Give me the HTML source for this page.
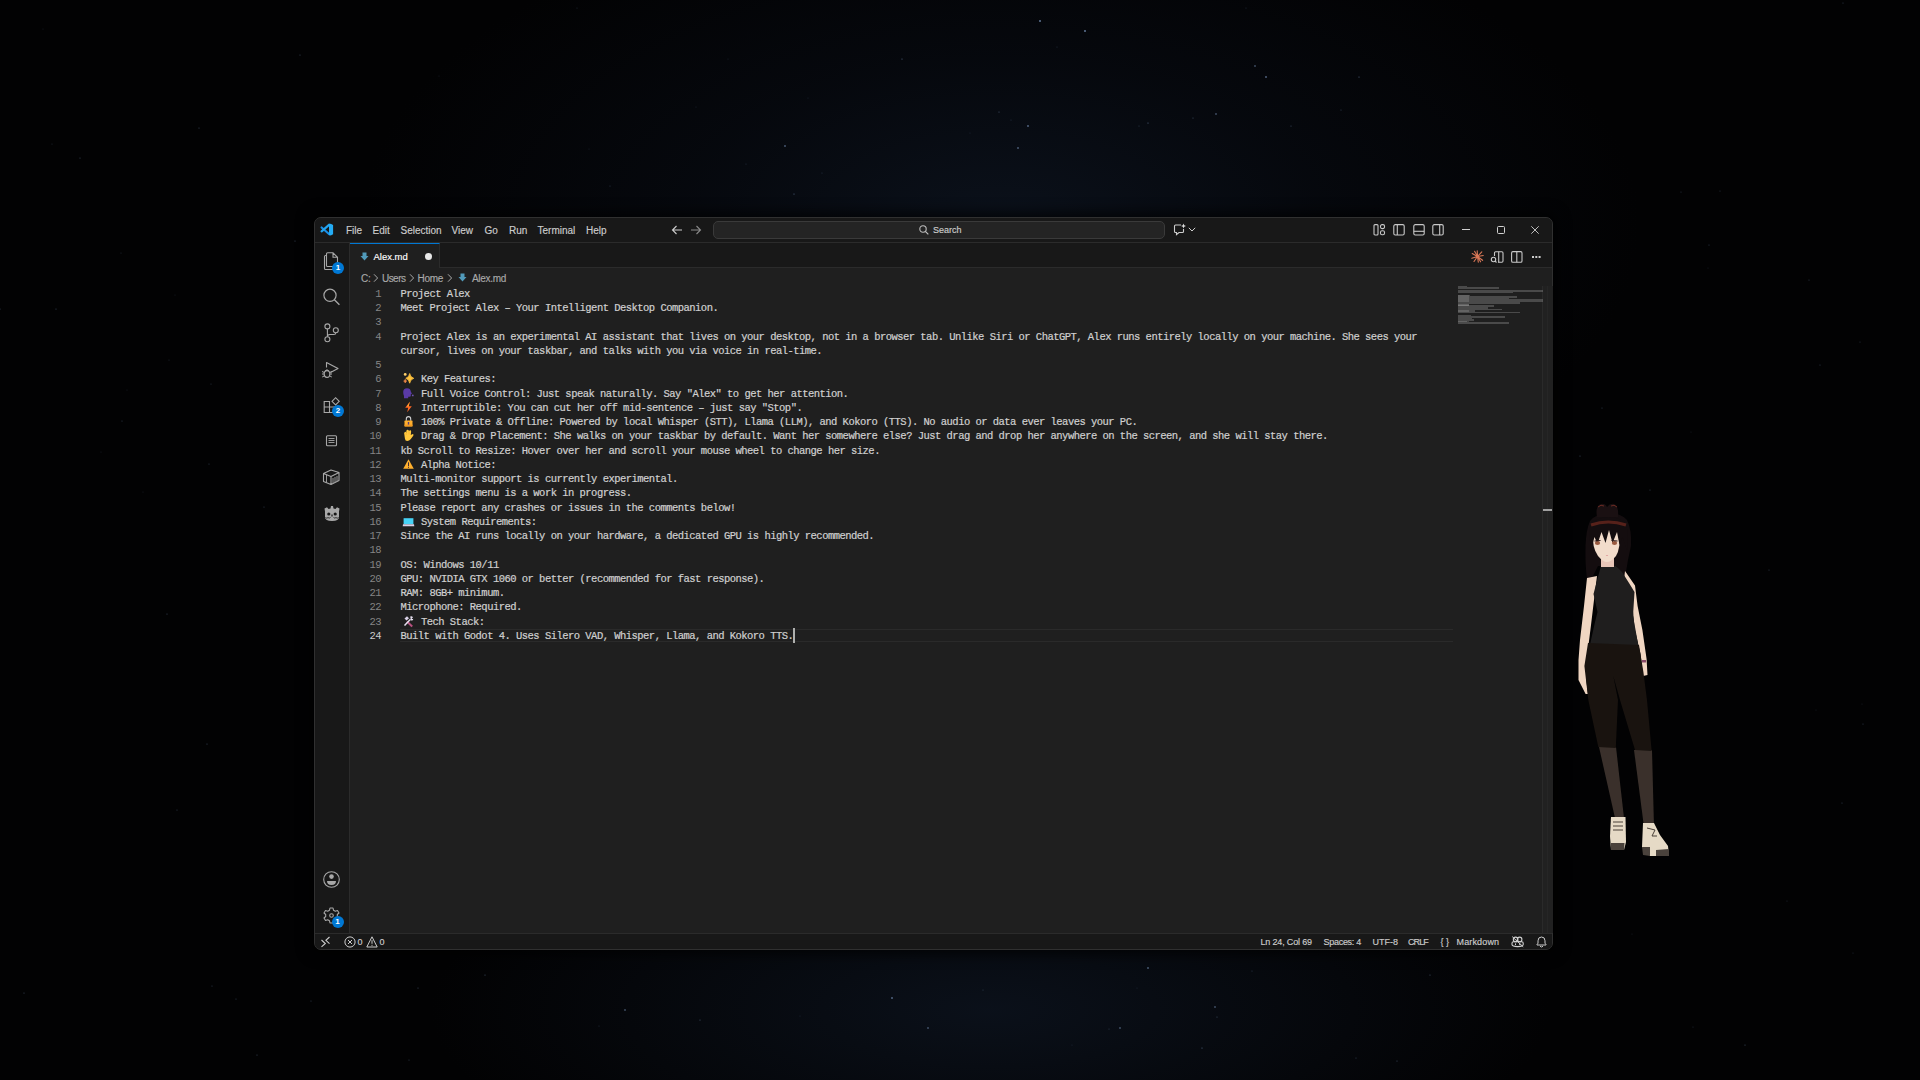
<!DOCTYPE html>
<html><head><meta charset="utf-8">
<style>
*{box-sizing:border-box;margin:0;padding:0}
html,body{width:1920px;height:1080px;overflow:hidden;background:#020203}
body{position:relative;font-family:"Liberation Sans",sans-serif}
#bg{position:absolute;left:0;top:0;width:1920px;height:1080px;
 background:
  radial-gradient(ellipse 640px 330px at 1000px 225px, rgba(11,17,27,1), rgba(8,12,20,0.6) 50%, rgba(0,0,0,0) 100%),
  radial-gradient(ellipse 560px 190px at 990px 1010px, rgba(11,17,27,0.95), rgba(0,0,0,0) 100%),
  #020203;}
.abs{position:absolute}
#win{position:absolute;left:314px;top:217px;width:1239px;height:733px;background:#1f1f1f;border-radius:7px;overflow:hidden;border:1px solid #303030;box-shadow:0 0 14px 4px rgba(0,0,0,0.75)}
#title{position:absolute;left:0;top:0;width:1239px;height:25px;background:#181818;border-bottom:1px solid #2b2b2b}
#act{position:absolute;left:0;top:25px;width:35px;height:692px;background:#181818;border-right:1px solid #2b2b2b}
#tabs{position:absolute;left:35px;top:25px;width:1204px;height:25px;background:#181818;border-bottom:1px solid #2b2b2b}
#tab{position:absolute;left:35px;top:25px;width:90px;height:25px;background:#1f1f1f;border-top:1px solid #0078d4;border-right:1px solid #2b2b2b}
#status{position:absolute;left:0;top:715px;width:1239px;height:17px;background:#181818;border-top:1px solid #2b2b2b}
.t{position:absolute;white-space:nowrap;color:#cccccc;line-height:12px;-webkit-text-stroke:0.15px currentColor}
.menu{font-size:10px}
.sb{font-size:9px;color:#cccccc}
.bc{font-size:10px;color:#a9a9a9}
#code{position:absolute;left:400.5px;top:286.75px;font-family:"Liberation Mono",monospace;font-size:10.5px;letter-spacing:-0.525px;line-height:14.25px;color:#d0d0d0;white-space:pre;-webkit-text-stroke:0.2px #d0d0d0}
#nums{position:absolute;left:349px;top:286.75px;width:32px;text-align:right;font-family:"Liberation Mono",monospace;font-size:10.5px;letter-spacing:-0.525px;line-height:14.25px;color:#858585;white-space:pre}
.em{display:inline-block;width:14.7px;height:10px;vertical-align:-1px;position:relative;letter-spacing:0}
.em svg{position:absolute;left:2px;top:-1px;width:11px;height:12px;overflow:visible}
svg.i{position:absolute;overflow:visible}
</style></head><body>
<div id="bg"></div>
<!-- stars -->
<svg class="abs" style="left:0;top:0" width="1920" height="1080">
<circle cx="1040" cy="21" r="0.8" fill="rgba(160,195,245,1.00)"/>
<circle cx="1085" cy="31" r="0.8" fill="rgba(160,195,245,1.00)"/>
<circle cx="1266" cy="77" r="0.8" fill="rgba(160,195,245,0.80)"/>
<circle cx="1255" cy="66" r="0.8" fill="rgba(160,195,245,0.60)"/>
<circle cx="1216" cy="114" r="0.8" fill="rgba(160,195,245,0.60)"/>
<circle cx="1028" cy="126" r="0.8" fill="rgba(160,195,245,0.80)"/>
<circle cx="1018" cy="148" r="0.8" fill="rgba(160,195,245,0.70)"/>
<circle cx="785" cy="146" r="0.8" fill="rgba(160,195,245,0.70)"/>
<circle cx="1148" cy="123" r="0.6" fill="rgba(160,195,245,0.50)"/>
<circle cx="1359" cy="77" r="0.6" fill="rgba(160,195,245,0.50)"/>
<circle cx="794" cy="194" r="0.6" fill="rgba(160,195,245,0.50)"/>
<circle cx="902" cy="59" r="0.6" fill="rgba(160,195,245,0.50)"/>
<circle cx="999" cy="112" r="0.6" fill="rgba(160,195,245,0.40)"/>
<circle cx="892" cy="998" r="0.8" fill="rgba(160,195,245,0.80)"/>
<circle cx="1148" cy="968" r="0.8" fill="rgba(160,195,245,0.70)"/>
<circle cx="1120" cy="1028" r="0.8" fill="rgba(160,195,245,0.60)"/>
<circle cx="625" cy="1010" r="0.8" fill="rgba(160,195,245,0.60)"/>
<circle cx="928" cy="1028" r="0.8" fill="rgba(160,195,245,0.60)"/>
<circle cx="1215" cy="1007" r="0.8" fill="rgba(160,195,245,0.60)"/>
<circle cx="1202" cy="1048" r="0.6" fill="rgba(160,195,245,0.50)"/>
<circle cx="485" cy="975" r="0.6" fill="rgba(160,195,245,0.40)"/>
<circle cx="700" cy="1020" r="0.6" fill="rgba(160,195,245,0.40)"/>
<circle cx="1430" cy="975" r="0.6" fill="rgba(160,195,245,0.40)"/>
<circle cx="1745" cy="1045" r="0.6" fill="rgba(160,195,245,0.40)"/>
<circle cx="808" cy="98" r="0.6" fill="rgba(160,195,245,0.15)"/>
<circle cx="1681" cy="192" r="0.6" fill="rgba(160,195,245,0.25)"/>
<circle cx="1193" cy="118" r="0.6" fill="rgba(160,195,245,0.35)"/>
<circle cx="439" cy="76" r="0.6" fill="rgba(160,195,245,0.15)"/>
<circle cx="143" cy="492" r="0.6" fill="rgba(160,195,245,0.15)"/>
<circle cx="121" cy="253" r="0.6" fill="rgba(160,195,245,0.20)"/>
<circle cx="1291" cy="126" r="0.6" fill="rgba(160,195,245,0.35)"/>
<circle cx="101" cy="452" r="0.6" fill="rgba(160,195,245,0.15)"/>
<circle cx="295" cy="241" r="0.6" fill="rgba(160,195,245,0.35)"/>
<circle cx="211" cy="384" r="0.6" fill="rgba(160,195,245,0.25)"/>
<circle cx="199" cy="128" r="0.6" fill="rgba(160,195,245,0.35)"/>
<circle cx="122" cy="421" r="0.6" fill="rgba(160,195,245,0.30)"/>
<circle cx="167" cy="614" r="0.6" fill="rgba(160,195,245,0.35)"/>
<circle cx="589" cy="149" r="0.6" fill="rgba(160,195,245,0.15)"/>
<circle cx="311" cy="1001" r="0.6" fill="rgba(160,195,245,0.30)"/>
<circle cx="80" cy="158" r="0.6" fill="rgba(160,195,245,0.35)"/>
<circle cx="1217" cy="1017" r="0.6" fill="rgba(160,195,245,0.35)"/>
<circle cx="1632" cy="934" r="0.6" fill="rgba(160,195,245,0.15)"/>
<circle cx="1720" cy="191" r="0.6" fill="rgba(160,195,245,0.25)"/>
<circle cx="970" cy="133" r="0.6" fill="rgba(160,195,245,0.15)"/>
<circle cx="1816" cy="710" r="0.6" fill="rgba(160,195,245,0.15)"/>
<circle cx="1011" cy="120" r="0.6" fill="rgba(160,195,245,0.20)"/>
<circle cx="264" cy="507" r="0.6" fill="rgba(160,195,245,0.30)"/>
<circle cx="800" cy="1016" r="0.6" fill="rgba(160,195,245,0.15)"/>
<circle cx="1809" cy="280" r="0.6" fill="rgba(160,195,245,0.30)"/>
<circle cx="1769" cy="570" r="0.6" fill="rgba(160,195,245,0.30)"/>
<circle cx="169" cy="360" r="0.6" fill="rgba(160,195,245,0.20)"/>
<circle cx="24" cy="993" r="0.6" fill="rgba(160,195,245,0.35)"/>
<circle cx="577" cy="8" r="0.6" fill="rgba(160,195,245,0.20)"/>
<circle cx="257" cy="1055" r="0.6" fill="rgba(160,195,245,0.35)"/>
<circle cx="1341" cy="110" r="0.6" fill="rgba(160,195,245,0.30)"/>
<circle cx="1842" cy="803" r="0.6" fill="rgba(160,195,245,0.30)"/>
<circle cx="212" cy="986" r="0.6" fill="rgba(160,195,245,0.30)"/>
<circle cx="127" cy="390" r="0.6" fill="rgba(160,195,245,0.15)"/>
<circle cx="696" cy="107" r="0.6" fill="rgba(160,195,245,0.15)"/>
<circle cx="0" cy="309" r="0.6" fill="rgba(160,195,245,0.35)"/>
<circle cx="207" cy="744" r="0.6" fill="rgba(160,195,245,0.35)"/>
<circle cx="52" cy="144" r="0.6" fill="rgba(160,195,245,0.20)"/>
<circle cx="236" cy="999" r="0.6" fill="rgba(160,195,245,0.30)"/>
<circle cx="983" cy="990" r="0.6" fill="rgba(160,195,245,0.25)"/>
<circle cx="175" cy="295" r="0.6" fill="rgba(160,195,245,0.15)"/>
<circle cx="1057" cy="47" r="0.6" fill="rgba(160,195,245,0.20)"/>
<circle cx="300" cy="55" r="0.6" fill="rgba(160,195,245,0.35)"/>
<circle cx="610" cy="186" r="0.6" fill="rgba(160,195,245,0.25)"/>
<circle cx="1860" cy="342" r="0.6" fill="rgba(160,195,245,0.25)"/>
<circle cx="1580" cy="456" r="0.6" fill="rgba(160,195,245,0.35)"/>
<circle cx="1109" cy="1029" r="0.6" fill="rgba(160,195,245,0.25)"/>
<circle cx="1650" cy="490" r="0.6" fill="rgba(160,195,245,0.30)"/>
<circle cx="409" cy="1060" r="0.6" fill="rgba(160,195,245,0.30)"/>
<circle cx="728" cy="59" r="0.6" fill="rgba(160,195,245,0.15)"/>
<circle cx="746" cy="164" r="0.6" fill="rgba(160,195,245,0.20)"/>
<circle cx="209" cy="464" r="0.6" fill="rgba(160,195,245,0.30)"/>
<circle cx="418" cy="988" r="0.6" fill="rgba(160,195,245,0.35)"/>
<circle cx="1843" cy="3" r="0.6" fill="rgba(160,195,245,0.30)"/>
<circle cx="1862" cy="704" r="0.6" fill="rgba(160,195,245,0.15)"/>
<circle cx="1709" cy="245" r="0.6" fill="rgba(160,195,245,0.30)"/>
<circle cx="1602" cy="408" r="0.6" fill="rgba(160,195,245,0.30)"/>
<circle cx="1820" cy="365" r="0.6" fill="rgba(160,195,245,0.30)"/>
<circle cx="177" cy="810" r="0.6" fill="rgba(160,195,245,0.30)"/>
<circle cx="822" cy="173" r="0.6" fill="rgba(160,195,245,0.20)"/>
<circle cx="56" cy="309" r="0.6" fill="rgba(160,195,245,0.35)"/>
<circle cx="1853" cy="953" r="0.6" fill="rgba(160,195,245,0.20)"/>
<circle cx="1252" cy="971" r="0.6" fill="rgba(160,195,245,0.25)"/>
<circle cx="43" cy="29" r="0.6" fill="rgba(160,195,245,0.15)"/>
<circle cx="1691" cy="432" r="0.6" fill="rgba(160,195,245,0.15)"/>
<circle cx="599" cy="1026" r="0.6" fill="rgba(160,195,245,0.20)"/>
<circle cx="1708" cy="268" r="0.6" fill="rgba(160,195,245,0.15)"/>
<circle cx="1863" cy="724" r="0.6" fill="rgba(160,195,245,0.30)"/>
<circle cx="1356" cy="1058" r="0.6" fill="rgba(160,195,245,0.30)"/>
<circle cx="1693" cy="1027" r="0.6" fill="rgba(160,195,245,0.20)"/>
<circle cx="1072" cy="1045" r="0.6" fill="rgba(160,195,245,0.15)"/>
<circle cx="1787" cy="901" r="0.6" fill="rgba(160,195,245,0.20)"/>
<circle cx="1246" cy="8" r="0.6" fill="rgba(160,195,245,0.20)"/>
<circle cx="1139" cy="126" r="0.6" fill="rgba(160,195,245,0.25)"/>
<circle cx="1397" cy="1061" r="0.6" fill="rgba(160,195,245,0.35)"/>
<circle cx="1137" cy="988" r="0.6" fill="rgba(160,195,245,0.15)"/>
</svg>
<!--STARS-END-->
<div id="win">
 <div id="title"></div>
 <div id="act"></div>
 <div id="tabs"></div>
 <div id="tab"></div>
 <div id="status"></div>
</div>
<!-- title bar -->
<svg class="i" style="left:317px;top:220px" width="22" height="20" viewBox="0 0 22 20"><path d="M4.6 7.5L12.3 14.3" stroke="#1a8fe6" stroke-width="2.2" stroke-linecap="round"/><path d="M4.6 11.4L12.3 4.7" stroke="#22a4f0" stroke-width="2.2" stroke-linecap="round"/><path d="M12 4.3L13.8 3.8L16.1 5V14.3L13.8 15.4L12 14.9Z" fill="#24acf4"/></svg>
<div class="t menu" style="left:346px;top:225px">File</div>
<div class="t menu" style="left:372.5px;top:225px">Edit</div>
<div class="t menu" style="left:400.5px;top:225px">Selection</div>
<div class="t menu" style="left:451.5px;top:225px">View</div>
<div class="t menu" style="left:484.5px;top:225px">Go</div>
<div class="t menu" style="left:509px;top:225px">Run</div>
<div class="t menu" style="left:537.5px;top:225px">Terminal</div>
<div class="t menu" style="left:586px;top:225px">Help</div>
<svg class="i" style="left:671px;top:224px" width="12" height="12" viewBox="0 0 12 12"><path d="M11 6H1.5M5.5 2L1.5 6l4 4" fill="none" stroke="#cccccc" stroke-width="1.1"/></svg>
<svg class="i" style="left:690px;top:224px" width="12" height="12" viewBox="0 0 12 12"><path d="M1 6h9.5M6.5 2l4 4-4 4" fill="none" stroke="#8a8a8a" stroke-width="1.1"/></svg>
<div class="abs" style="left:713px;top:221px;width:452px;height:18px;border:1px solid #3a3a3a;border-radius:5px;background:#242424"></div>
<svg class="i" style="left:919px;top:225px" width="10" height="10" viewBox="0 0 10 10"><circle cx="4" cy="4" r="3.2" fill="none" stroke="#bdbdbd" stroke-width="1.1"/><path d="M6.3 6.3L9.3 9.3" stroke="#bdbdbd" stroke-width="1.2"/></svg>
<div class="t" style="left:933px;top:224px;font-size:9px;color:#cccccc">Search</div>
<svg class="i" style="left:1173px;top:223px" width="14" height="13" viewBox="0 0 14 13"><path d="M8 2H2.5Q1.5 2 1.5 3V8.5Q1.5 9.5 2.5 9.5H3.5V11.5L6 9.5H9.5Q10.5 9.5 10.5 8.5V6" fill="none" stroke="#cccccc" stroke-width="1.1"/><path d="M10.5 0.5L11.2 2.3L13 3L11.2 3.7L10.5 5.5L9.8 3.7L8 3L9.8 2.3Z" fill="#dddddd"/></svg>
<svg class="i" style="left:1188px;top:227px" width="8" height="5" viewBox="0 0 8 5"><path d="M0.8 0.8L4 4L7.2 0.8" fill="none" stroke="#cccccc" stroke-width="1"/></svg>
<svg class="i" style="left:1373px;top:224px" width="13" height="12" viewBox="0 0 13 12"><rect x="1" y="0.6" width="4" height="10.4" rx="1" fill="none" stroke="#c8c8c8" stroke-width="1.1"/><rect x="7.5" y="0.6" width="4" height="4" rx="1.5" fill="none" stroke="#c8c8c8" stroke-width="1.1"/><rect x="7.5" y="6.8" width="4" height="4" rx="1.5" fill="none" stroke="#c8c8c8" stroke-width="1.1"/></svg>
<svg class="i" style="left:1393px;top:224px" width="12" height="12" viewBox="0 0 12 12"><rect x="0.8" y="0.6" width="10.4" height="10.4" rx="1.5" fill="none" stroke="#c8c8c8" stroke-width="1.1"/><path d="M4.3 0.6V11" stroke="#c8c8c8" stroke-width="1.1"/></svg>
<svg class="i" style="left:1413px;top:224px" width="12" height="12" viewBox="0 0 12 12"><rect x="0.8" y="0.6" width="10.4" height="10.4" rx="1.5" fill="none" stroke="#c8c8c8" stroke-width="1.1"/><path d="M0.8 7.3H11.2" stroke="#c8c8c8" stroke-width="1.1"/></svg>
<svg class="i" style="left:1432px;top:224px" width="12" height="12" viewBox="0 0 12 12"><rect x="0.8" y="0.6" width="10.4" height="10.4" rx="1.5" fill="none" stroke="#c8c8c8" stroke-width="1.1"/><path d="M7.7 0.6V11" stroke="#c8c8c8" stroke-width="1.1"/></svg>
<div class="abs" style="left:1462px;top:229px;width:8px;height:1px;background:#d0d0d0"></div>
<div class="abs" style="left:1497px;top:226px;width:8px;height:8px;border:1px solid #d0d0d0;border-radius:1.5px"></div>
<svg class="i" style="left:1531px;top:226px" width="8" height="8" viewBox="0 0 8 8"><path d="M0.3 0.3L7.7 7.7M7.7 0.3L0.3 7.7" stroke="#d0d0d0" stroke-width="0.9"/></svg>

<!-- activity bar -->
<svg class="i" style="left:323px;top:252px" width="17" height="19" viewBox="0 0 17 19">
 <path d="M3.5 3.5H2.6Q1.5 3.5 1.5 4.6V16.4Q1.5 17.5 2.6 17.5H10.4Q11.5 17.5 11.5 16.4V15.5" fill="none" stroke="#a8a8a8" stroke-width="1.1"/>
 <path d="M4.6 0.8H10L14.5 5.3V13.4Q14.5 14.5 13.4 14.5H4.6Q3.5 14.5 3.5 13.4V1.9Q3.5 0.8 4.6 0.8Z M10 0.8V5.3H14.5" fill="none" stroke="#a8a8a8" stroke-width="1.1"/>
</svg>
<div class="abs" style="left:332px;top:261.5px;width:12px;height:12px;border-radius:6px;background:#0078d4;color:#fff;font-size:8px;line-height:12px;text-align:center;font-weight:bold">1</div>
<svg class="i" style="left:322px;top:288px" width="19" height="19" viewBox="0 0 19 19"><circle cx="8" cy="7.3" r="6.1" fill="none" stroke="#a8a8a8" stroke-width="1.2"/><path d="M12.4 11.7L17.4 16.8" stroke="#a8a8a8" stroke-width="1.3"/></svg>
<svg class="i" style="left:323px;top:322px" width="17" height="21" viewBox="0 0 17 21"><circle cx="4.4" cy="4.4" r="2.5" fill="none" stroke="#a8a8a8" stroke-width="1.1"/><circle cx="12.8" cy="8.2" r="2.5" fill="none" stroke="#a8a8a8" stroke-width="1.1"/><circle cx="4.4" cy="17.3" r="2.5" fill="none" stroke="#a8a8a8" stroke-width="1.1"/><path d="M4.4 6.9V14.8M12.8 10.7Q12.8 12.5 10.8 12.5H6.8Q4.4 12.5 4.4 14.8" fill="none" stroke="#a8a8a8" stroke-width="1.1"/></svg>
<svg class="i" style="left:321px;top:361px" width="19" height="18" viewBox="0 0 19 18">
 <path d="M5.5 6.5V1.5L17 7.5L9.5 11.5" fill="none" stroke="#a8a8a8" stroke-width="1.1" stroke-linejoin="round"/>
 <ellipse cx="6" cy="13" rx="2.8" ry="3.4" fill="none" stroke="#a8a8a8" stroke-width="1.1"/>
 <path d="M1 10.5L3.3 11.5M1 13H3.2M1.2 16L3.5 14.8M11 10.5L8.7 11.5M11 13H8.8M10.8 16L8.5 14.8M4.3 9.6Q6 8 7.7 9.6" fill="none" stroke="#a8a8a8" stroke-width="1"/>
</svg>
<svg class="i" style="left:323px;top:396px" width="18" height="18" viewBox="0 0 18 18">
 <path d="M1.2 5.5H6.5V16.5H1.2ZM1.2 11H12V16.5H6.5M6.5 5.5V11" fill="none" stroke="#a8a8a8" stroke-width="1.1"/>
 <path d="M9 5.3L12.6 1.7L16.2 5.3L12.6 8.9Z" fill="none" stroke="#a8a8a8" stroke-width="1.1"/>
</svg>
<div class="abs" style="left:332px;top:405px;width:12px;height:12px;border-radius:6px;background:#0078d4;color:#fff;font-size:8px;line-height:12px;text-align:center;font-weight:bold">2</div>
<svg class="i" style="left:325px;top:435px" width="13" height="12" viewBox="0 0 13 12"><rect x="1.5" y="0.8" width="10" height="10" rx="1" fill="none" stroke="#a8a8a8" stroke-width="1.1"/><path d="M3.5 3.5H9.5M3.5 5.5H9.5M3.5 7.5H9.5" stroke="#a8a8a8" stroke-width="0.9"/></svg>
<svg class="i" style="left:322px;top:469px" width="19" height="17" viewBox="0 0 19 17">
 <path d="M1.5 4.5L9 1L17 3.5V11.5L9 15.5L1.5 12.5Z M1.5 4.5L9 7.5L17 3.5 M9 7.5V15.5" fill="none" stroke="#a8a8a8" stroke-width="1.1" stroke-linejoin="round"/>
 <path d="M4.5 6V13.5M11 9V14M13 8V13M15 7V12" stroke="#a8a8a8" stroke-width="0.9"/>
</svg>
<svg class="i" style="left:323px;top:505px" width="18" height="17" viewBox="0 0 18 17">
 <path fill="#a8a8a8" d="M2 6.5L1.5 3.5L4 2.3L5.5 4L7.5 3.4L8 1L10 1L10.5 3.4L12.5 4L14 2.3L16.5 3.5L16 6.5V12Q16 16 9 16Q2 16 2 12Z"/>
 <circle cx="5.8" cy="9" r="1.6" fill="#181818"/><circle cx="12.2" cy="9" r="1.6" fill="#181818"/><rect x="8.4" y="9.5" width="1.2" height="2" fill="#181818"/>
 <path d="M2.5 12.5Q4 14 5 12.5Q6 13.8 7.5 12.5M10.5 12.5Q12 13.8 13 12.5Q14 14 15.5 12.5" fill="none" stroke="#181818" stroke-width="0.8"/>
</svg>
<svg class="i" style="left:323px;top:871px" width="17" height="17" viewBox="0 0 17 17"><circle cx="8.5" cy="8.5" r="7.8" fill="none" stroke="#a8a8a8" stroke-width="1.1"/><circle cx="8.5" cy="5.6" r="2.3" fill="#a8a8a8"/><path d="M4 10H13Q13 14 8.5 14Q4 14 4 10Z" fill="#a8a8a8"/></svg>
<svg class="i" style="left:323px;top:907px" width="17" height="17" viewBox="0 0 17 17"><path d="M7 1H10L10.5 3.2L12.3 4.2L14.5 3.5L16 6L14.3 7.5V9.5L16 11L14.5 13.5L12.3 12.8L10.5 13.8L10 16H7L6.5 13.8L4.7 12.8L2.5 13.5L1 11L2.7 9.5V7.5L1 6L2.5 3.5L4.7 4.2L6.5 3.2Z" fill="none" stroke="#a8a8a8" stroke-width="1.1" stroke-linejoin="round"/><circle cx="8.5" cy="8.5" r="1.8" fill="none" stroke="#a8a8a8" stroke-width="1.1"/></svg>
<div class="abs" style="left:331.5px;top:916px;width:12px;height:12px;border-radius:6px;background:#0078d4;color:#fff;font-size:8px;line-height:12px;text-align:center;font-weight:bold">1</div>

<!-- tabs -->
<svg class="i" style="left:360px;top:252px" width="9" height="9" viewBox="0 0 9 9"><path d="M2.5 0.5H6.5V4H8.5L4.5 8.5L0.5 4H2.5Z" fill="#519aba"/></svg>
<div class="t" style="left:373.5px;top:251px;font-size:9.5px;color:#ffffff">Alex.md</div>
<div class="abs" style="left:424.5px;top:253px;width:7px;height:7px;border-radius:4px;background:#e8e8e8"></div>
<svg class="i" style="left:1471px;top:250px" width="13" height="13" viewBox="0 0 13 13"><g stroke="#d97757" stroke-width="1.1" stroke-linecap="round"><path d="M6.5 6.5L6.2 0.8M6.5 6.5L10.8 1.8M6.5 6.5L12.3 5.5M6.5 6.5L11.6 10.3M6.5 6.5L7.3 12.2M6.5 6.5L3 11.5M6.5 6.5L0.8 8.3M6.5 6.5L1.2 3.5M6.5 6.5L3.6 1.3M6.5 6.5L9.6 11.8"/></g><circle cx="6.5" cy="6.5" r="1.6" fill="#d97757"/></svg>
<svg class="i" style="left:1490px;top:251px" width="14" height="12" viewBox="0 0 14 12"><path d="M4.5 5V2Q4.5 0.8 5.7 0.8H11.8Q13 0.8 13 2V10Q13 11.2 11.8 11.2H8" fill="none" stroke="#c8c8c8" stroke-width="1.1"/><path d="M8.7 0.8V11.2" stroke="#c8c8c8" stroke-width="1.1"/><circle cx="3.5" cy="8.5" r="2.2" fill="none" stroke="#c8c8c8" stroke-width="1.1"/><path d="M5 10L6.5 11.5" stroke="#c8c8c8" stroke-width="1.1"/></svg>
<svg class="i" style="left:1511px;top:251px" width="12" height="12" viewBox="0 0 12 12"><rect x="0.6" y="0.6" width="10.4" height="10.6" rx="1.3" fill="none" stroke="#c8c8c8" stroke-width="1.1"/><path d="M5.8 0.6V11.2" stroke="#c8c8c8" stroke-width="1.1"/></svg>
<div class="abs" style="left:1532px;top:256px;width:2px;height:2px;background:#cccccc;box-shadow:3.3px 0 0 #cccccc,6.6px 0 0 #cccccc"></div>
<!-- breadcrumbs -->
<div class="t bc" style="left:361px;top:272.6px;letter-spacing:-0.3px">C:</div>
<svg class="i" style="left:373px;top:273.5px" width="6" height="8" viewBox="0 0 6 8"><path d="M1 0.3L4.6 4L1 7.7" fill="none" stroke="#a9a9a9" stroke-width="1"/></svg>
<div class="t bc" style="left:382px;top:272.6px;letter-spacing:-0.55px">Users</div>
<svg class="i" style="left:408.5px;top:273.5px" width="6" height="8" viewBox="0 0 6 8"><path d="M1 0.3L4.6 4L1 7.7" fill="none" stroke="#a9a9a9" stroke-width="1"/></svg>
<div class="t bc" style="left:417.5px;top:272.6px;letter-spacing:-0.3px">Home</div>
<svg class="i" style="left:447px;top:273.5px" width="6" height="8" viewBox="0 0 6 8"><path d="M1 0.3L4.6 4L1 7.7" fill="none" stroke="#a9a9a9" stroke-width="1"/></svg>
<svg class="i" style="left:457.5px;top:273px" width="9" height="9" viewBox="0 0 9 9"><path d="M2.5 0.5H6.5V4H8.5L4.5 8.5L0.5 4H2.5Z" fill="#519aba"/></svg>
<div class="t bc" style="left:472px;top:272.6px;letter-spacing:-0.3px">Alex.md</div>

<!-- editor -->
<div class="abs" style="left:400px;top:628.6px;width:1053px;height:13.6px;border-top:1px solid #2a2a2a;border-bottom:1px solid #2a2a2a"></div>
<div id="code">Project Alex
Meet Project Alex – Your Intelligent Desktop Companion.

Project Alex is an experimental AI assistant that lives on your desktop, not in a browser tab. Unlike Siri or ChatGPT, Alex runs entirely locally on your machine. She sees your
cursor, lives on your taskbar, and talks with you via voice in real-time.

<span class="em"><svg viewBox="0 0 11 12"><path d="M6.7 1.5Q7.2 5.2 10.8 6.3Q7.2 7.4 6.7 11.2Q6.2 7.4 2.8 6.3Q6.2 5.2 6.7 1.5Z" fill="#ffc23d" stroke="#ffc23d" stroke-width="0.8" stroke-linejoin="round"/><circle cx="2.2" cy="2.4" r="1.4" fill="#ffcf6a"/><path d="M2.2 7.2Q2.5 8.7 3.8 9.1Q2.5 9.5 2.2 11Q1.9 9.5 0.6 9.1Q1.9 8.7 2.2 7.2Z" fill="#ff8f4a" stroke="#ff8f4a" stroke-width="0.5"/></svg></span> Key Features:
<span class="em"><svg viewBox="0 0 11 12"><path d="M0.2 5Q0.2 1.2 4 1.2Q7.6 1.2 7.8 4.6L8.9 6.8L7.8 7.3V8.8Q7.8 9.8 6.6 9.8H5.2V11.3H1V9Q0.2 7.5 0.2 5Z" fill="#5a3aa6"/><circle cx="9.8" cy="8.4" r="0.9" fill="#6f56b0"/></svg></span> Full Voice Control: Just speak naturally. Say "Alex" to get her attention.
<span class="em"><svg viewBox="0 0 11 12"><path d="M6.8 0.8L2.2 6.8H5.2L4.2 11.3L8.8 5.2H5.8Z" fill="#ff6723"/><path d="M6.8 0.8L4 5.5H5.5Z" fill="#ffb02e"/></svg></span> Interruptible: You can cut her off mid-sentence – just say "Stop".
<span class="em"><svg viewBox="0 0 11 12"><path d="M3.3 5.8V3.9Q3.3 1.6 5.5 1.6Q7.7 1.6 7.7 3.9V5.8" fill="none" stroke="#d0d0d0" stroke-width="1.1"/><rect x="1.5" y="5.6" width="8" height="5.8" rx="0.6" fill="#ffb02e"/><rect x="1.5" y="9.6" width="8" height="1.8" fill="#f29a22"/><rect x="4.8" y="7" width="1.4" height="2.6" fill="#5a3d7a"/></svg></span> 100% Private &amp; Offline: Powered by local Whisper (STT), Llama (LLM), and Kokoro (TTS). No audio or data ever leaves your PC.
<span class="em"><svg viewBox="0 0 11 12"><path d="M1.4 6Q0.6 3.4 1.9 2.9Q3 2.6 3.3 4L3.3 2.2Q3.5 0.7 4.8 0.8Q5.9 0.9 6 2.3L6.2 1.7Q6.8 0.9 7.6 1.3Q8.4 1.7 8.1 3.1L7.8 6L9.3 5.2Q10.3 4.8 10.5 5.8Q10.6 6.5 9.7 7.4L7.6 10.2Q6.2 11.9 4.3 11.9Q2.1 11.9 1.9 9.4Z" fill="#ffc83d"/><path d="M3.3 4V6M6 2.3V5.5" stroke="#f0a030" stroke-width="0.5"/></svg></span> Drag &amp; Drop Placement: She walks on your taskbar by default. Want her somewhere else? Just drag and drop her anywhere on the screen, and she will stay there.
kb Scroll to Resize: Hover over her and scroll your mouse wheel to change her size.
<span class="em"><svg viewBox="0 0 11 12"><path d="M5.5 1.2L10.8 10.8H0.2Z" fill="#ffb02e"/><rect x="5" y="4.3" width="1" height="3.8" fill="#402a32"/><rect x="5" y="8.8" width="1" height="1" fill="#402a32"/></svg></span> Alpha Notice:
Multi-monitor support is currently experimental.
The settings menu is a work in progress.
Please report any crashes or issues in the comments below!
<span class="em"><svg viewBox="0 0 11 12"><rect x="0.6" y="3.2" width="9.8" height="6" fill="#46d2f5"/><path d="M0 9.2H11L11.3 11.3H-0.3Z" fill="#d8d0e6"/></svg></span> System Requirements:
Since the AI runs locally on your hardware, a dedicated GPU is highly recommended.

OS: Windows 10/11
GPU: NVIDIA GTX 1060 or better (recommended for fast response).
RAM: 8GB+ minimum.
Microphone: Required.
<span class="em"><svg viewBox="0 0 11 12"><path d="M4 6.5L9.2 11.5" stroke="#b8507f" stroke-width="2"/><path d="M1.5 3.5L4 1.2L6 3.2L3.5 5.5Z" fill="#d8d0e6"/><path d="M1.5 10.5L7.5 4.3" stroke="#e6e0f0" stroke-width="1.5"/><path d="M7.2 1.5Q9.2 0.8 10 2.5Q9 2.8 8.6 3.5Q9.3 4.2 10.3 3.7Q10.4 5.8 8 5.6" fill="#e6e0f0"/></svg></span> Tech Stack:
Built with Godot 4. Uses Silero VAD, Whisper, Llama, and Kokoro TTS.</div>
<div id="nums">1
2
3
4

5
6
7
8
9
10
11
12
13
14
15
16
17
18
19
20
21
22
23
<span style="color:#cccccc">24</span></div>
<div class="abs" style="left:793px;top:628px;width:2px;height:14.5px;background:#aeafad"></div>
<!--EDITOR-END-->
<!-- status bar -->
<svg class="i" style="left:320px;top:937px" width="11" height="11" viewBox="0 0 11 11"><path d="M1.5 3L5.3 6.5L1.5 9.9M9.5 0L5.9 3.3L9.5 6.7" fill="none" stroke="#cccccc" stroke-width="1.1"/></svg>
<svg class="i" style="left:343.5px;top:936px" width="12" height="12" viewBox="0 0 12 12"><circle cx="6" cy="6" r="5.1" fill="none" stroke="#cccccc" stroke-width="1"/><path d="M4 4L8 8M8 4L4 8" stroke="#cccccc" stroke-width="1"/></svg>
<div class="t sb" style="left:357.5px;top:936px">0</div>
<svg class="i" style="left:365.5px;top:936px" width="12" height="12" viewBox="0 0 12 12"><path d="M6 0.8L11.2 11H0.8Z" fill="none" stroke="#cccccc" stroke-width="1" stroke-linejoin="round"/><path d="M6 4.2V7.8M6 8.8V9.8" stroke="#cccccc" stroke-width="1"/></svg>
<div class="t sb" style="left:379.5px;top:936px">0</div>
<div class="t sb" style="left:1260.5px;top:936px;letter-spacing:-0.17px">Ln 24, Col 69</div>
<div class="t sb" style="left:1323.5px;top:936px;letter-spacing:-0.28px">Spaces: 4</div>
<div class="t sb" style="left:1372.5px;top:936px">UTF-8</div>
<div class="t sb" style="left:1408px;top:936px;letter-spacing:-0.9px">CRLF</div>
<div class="t sb" style="left:1440.5px;top:936px">{ }</div>
<div class="t sb" style="left:1456.5px;top:936px;letter-spacing:0.15px">Markdown</div>
<svg class="i" style="left:1510.5px;top:936px" width="14" height="12" viewBox="0 0 14 12"><circle cx="4.6" cy="3.4" r="2.3" fill="none" stroke="#d0d0d0" stroke-width="1.1"/><circle cx="8.6" cy="3.4" r="2.3" fill="none" stroke="#d0d0d0" stroke-width="1.1"/><path d="M1 7.2Q1 5.8 2.4 5.8H10.8Q12.2 5.8 12.2 7.2V8.6Q12.2 10.6 6.6 10.6Q1 10.6 1 8.6Z" fill="none" stroke="#d0d0d0" stroke-width="1.1"/><path d="M4.5 7.4V9M8.7 7.4V9" stroke="#d0d0d0" stroke-width="1"/><path d="M1.2 0.6L12.2 10.8" stroke="#d0d0d0" stroke-width="1"/></svg>
<svg class="i" style="left:1535.5px;top:936px" width="11" height="12" viewBox="0 0 11 12"><path d="M1 9V8.5L2 7.2V4.8Q2 1 5.5 1Q9 1 9 4.8V7.2L10 8.5V9Z" fill="none" stroke="#cccccc" stroke-width="1" stroke-linejoin="round"/><path d="M4 10.2Q5.5 11.8 7 10.2" fill="none" stroke="#cccccc" stroke-width="1"/></svg>
<!-- minimap & scrollbar -->
<div class="abs" style="left:1541.5px;top:286px;width:11px;height:647px;background:#212121;border-left:1px solid #2a2a2a"></div><div class="abs" style="left:1546.5px;top:286px;width:1px;height:647px;background:#262626"></div>
<div class="abs" style="left:1543px;top:509px;width:9px;height:2px;background:#a0a0a0"></div>
<!-- minimap -->
<div class="abs" style="left:1458px;top:285.70px;width:9.0px;height:1.6px;background:rgba(175,175,175,0.30)"></div>
<div class="abs" style="left:1458px;top:287.22px;width:41.2px;height:1.6px;background:rgba(175,175,175,0.30)"></div>
<div class="abs" style="left:1458px;top:290.26px;width:85.0px;height:1.6px;background:rgba(175,175,175,0.30)"></div>
<div class="abs" style="left:1458px;top:291.78px;width:54.8px;height:1.6px;background:rgba(175,175,175,0.30)"></div>
<div class="abs" style="left:1458px;top:294.82px;width:12.0px;height:1.6px;background:rgba(175,175,175,0.30)"></div>
<div class="abs" style="left:1458px;top:294.82px;width:11px;height:1.6px;background:rgba(175,175,175,0.25)"></div>
<div class="abs" style="left:1458px;top:296.34px;width:59.2px;height:1.6px;background:rgba(175,175,175,0.30)"></div>
<div class="abs" style="left:1458px;top:296.34px;width:11px;height:1.6px;background:rgba(175,175,175,0.25)"></div>
<div class="abs" style="left:1458px;top:297.86px;width:51.0px;height:1.6px;background:rgba(175,175,175,0.30)"></div>
<div class="abs" style="left:1458px;top:297.86px;width:11px;height:1.6px;background:rgba(175,175,175,0.25)"></div>
<div class="abs" style="left:1458px;top:299.38px;width:85.0px;height:1.6px;background:rgba(175,175,175,0.30)"></div>
<div class="abs" style="left:1458px;top:299.38px;width:11px;height:1.6px;background:rgba(175,175,175,0.25)"></div>
<div class="abs" style="left:1458px;top:300.90px;width:85.0px;height:1.6px;background:rgba(175,175,175,0.30)"></div>
<div class="abs" style="left:1458px;top:300.90px;width:11px;height:1.6px;background:rgba(175,175,175,0.25)"></div>
<div class="abs" style="left:1458px;top:302.42px;width:62.2px;height:1.6px;background:rgba(175,175,175,0.30)"></div>
<div class="abs" style="left:1458px;top:303.94px;width:10.5px;height:1.6px;background:rgba(175,175,175,0.30)"></div>
<div class="abs" style="left:1458px;top:303.94px;width:11px;height:1.6px;background:rgba(175,175,175,0.25)"></div>
<div class="abs" style="left:1458px;top:305.46px;width:36.0px;height:1.6px;background:rgba(175,175,175,0.30)"></div>
<div class="abs" style="left:1458px;top:306.98px;width:30.0px;height:1.6px;background:rgba(175,175,175,0.30)"></div>
<div class="abs" style="left:1458px;top:308.50px;width:43.5px;height:1.6px;background:rgba(175,175,175,0.30)"></div>
<div class="abs" style="left:1458px;top:310.02px;width:17.2px;height:1.6px;background:rgba(175,175,175,0.30)"></div>
<div class="abs" style="left:1458px;top:310.02px;width:11px;height:1.6px;background:rgba(175,175,175,0.25)"></div>
<div class="abs" style="left:1458px;top:311.54px;width:61.5px;height:1.6px;background:rgba(175,175,175,0.30)"></div>
<div class="abs" style="left:1458px;top:314.58px;width:12.8px;height:1.6px;background:rgba(175,175,175,0.30)"></div>
<div class="abs" style="left:1458px;top:316.10px;width:47.2px;height:1.6px;background:rgba(175,175,175,0.30)"></div>
<div class="abs" style="left:1458px;top:317.62px;width:13.5px;height:1.6px;background:rgba(175,175,175,0.30)"></div>
<div class="abs" style="left:1458px;top:319.14px;width:15.8px;height:1.6px;background:rgba(175,175,175,0.30)"></div>
<div class="abs" style="left:1458px;top:320.66px;width:9.0px;height:1.6px;background:rgba(175,175,175,0.30)"></div>
<div class="abs" style="left:1458px;top:320.66px;width:11px;height:1.6px;background:rgba(175,175,175,0.25)"></div>
<div class="abs" style="left:1458px;top:322.18px;width:51.0px;height:1.6px;background:rgba(175,175,175,0.30)"></div>
<!--MINIMAP-END-->

<!-- character -->
<svg class="abs" style="left:1570px;top:495px" width="105" height="370" viewBox="1570 495 105 370">
 <!-- hair back -->
 <path d="M1590 521Q1597 513 1608 513Q1621 513 1627 520Q1632 530 1631 546L1628 560L1626 572L1622 580L1618 579L1617 566L1598 566L1594 574L1591 580L1587 579Q1585 564 1585.5 546Q1586 530 1590 521Z" fill="#140d0f"/>
 <!-- bun -->
 <path d="M1597 517Q1595 506 1601 504Q1605 503 1607 507Q1610 503 1614 504Q1619 506 1618 517Z" fill="#1a1012"/>
 <path d="M1598 507Q1601 504 1604 506M1611 506Q1614 504 1617 507" stroke="#6a2a22" stroke-width="1" fill="none"/>
 <!-- stockings -->
 <path d="M1599 747L1616 747L1624 818L1615 818Z" fill="#3a302b"/>
 <path d="M1634 750L1652 750L1654 827L1644 827Z" fill="#3a302b"/>
 <!-- arms -->
 <path d="M1587 578L1597 576L1594 600L1591 625L1588.5 645L1586 678L1588 694L1585.6 694L1578.5 680L1578.5 660L1580 640L1584 606Z" fill="#f0d6c2"/>
 <path d="M1625 571L1635 585.6L1637.6 606L1642.4 630L1646.6 659L1647.5 675L1643 676L1640.5 654L1634.5 628L1632 600L1624 580Z" fill="#f0d6c2"/>
 <!-- top -->
 <path d="M1601 566L1616 566L1622 572L1629 583L1634.5 592L1633 615.7L1638.6 647L1589.9 645L1595 622L1597.5 612L1593.5 594L1597.7 578Z" fill="#1f1e1e"/>
 <!-- pants -->
 <path d="M1588 643L1639 645L1643.4 672L1647 700L1651.7 751L1635 750L1620 700L1613.3 676L1618 700L1615.8 748L1598.3 747L1588.3 700L1584.4 666Z" fill="#19130f"/>
 <!-- bracelet -->
 <rect x="1642" y="660" width="4" height="2.5" fill="#8a4a6a"/>
 <!-- shoes -->
 <path d="M1611 817L1625.5 817L1626 842L1624 850L1611 850L1610 836Z" fill="#e6dac6"/>
 <path d="M1611 843L1624.5 843L1624 850L1611 850Z" fill="#4a423c"/>
 <path d="M1613 822L1623 822M1613 826L1623 826M1613 830L1623 830" stroke="#4a4038" stroke-width="1"/>
 <path d="M1643 823L1654 823L1660 835L1668 846L1669 856L1650 856L1642 847Z" fill="#e6dac6"/>
 <path d="M1656 850L1669 849L1669 856L1656 856ZM1642 847L1650 847L1650 856L1643 855Z" fill="#4a423c"/>
 <path d="M1647 828L1655 830L1652 836L1657 836" stroke="#4a4038" stroke-width="1" fill="none"/>
 <!-- neck -->
 <path d="M1601 556L1614 556L1614 567L1601 567Z" fill="#e8c6b8"/>
 <!-- face -->
 <path d="M1592.5 530Q1592 548 1598 556Q1603 562 1607 562Q1611 562 1616 556Q1620.5 549 1620 530Z" fill="#f2dccb"/>
 <!-- bangs -->
 <path d="M1589 533Q1590 518 1608 517Q1626 517 1628 533L1627 550L1622.5 537L1619.5 545L1617 532L1612.5 543L1609 530L1605.5 543L1601.5 532L1597.5 544L1594.5 537L1591 550Z" fill="#140d0f"/>
 <path d="M1591 525Q1608 519 1626 525" stroke="#5e241c" stroke-width="3" fill="none" opacity="0.9"/>
 <!-- eyes -->
 <ellipse cx="1597.5" cy="543" rx="2.6" ry="2.1" fill="#9a5a40"/><ellipse cx="1614.5" cy="543" rx="2.6" ry="2.1" fill="#9a5a40"/>
 <path d="M1594.5 541L1600.5 540.5M1611.5 540.5L1617.5 541" stroke="#2a1a1a" stroke-width="1"/>
 <ellipse cx="1607" cy="555.5" rx="1.2" ry="0.6" fill="#e0a0a0"/>
</svg>

</body></html>
